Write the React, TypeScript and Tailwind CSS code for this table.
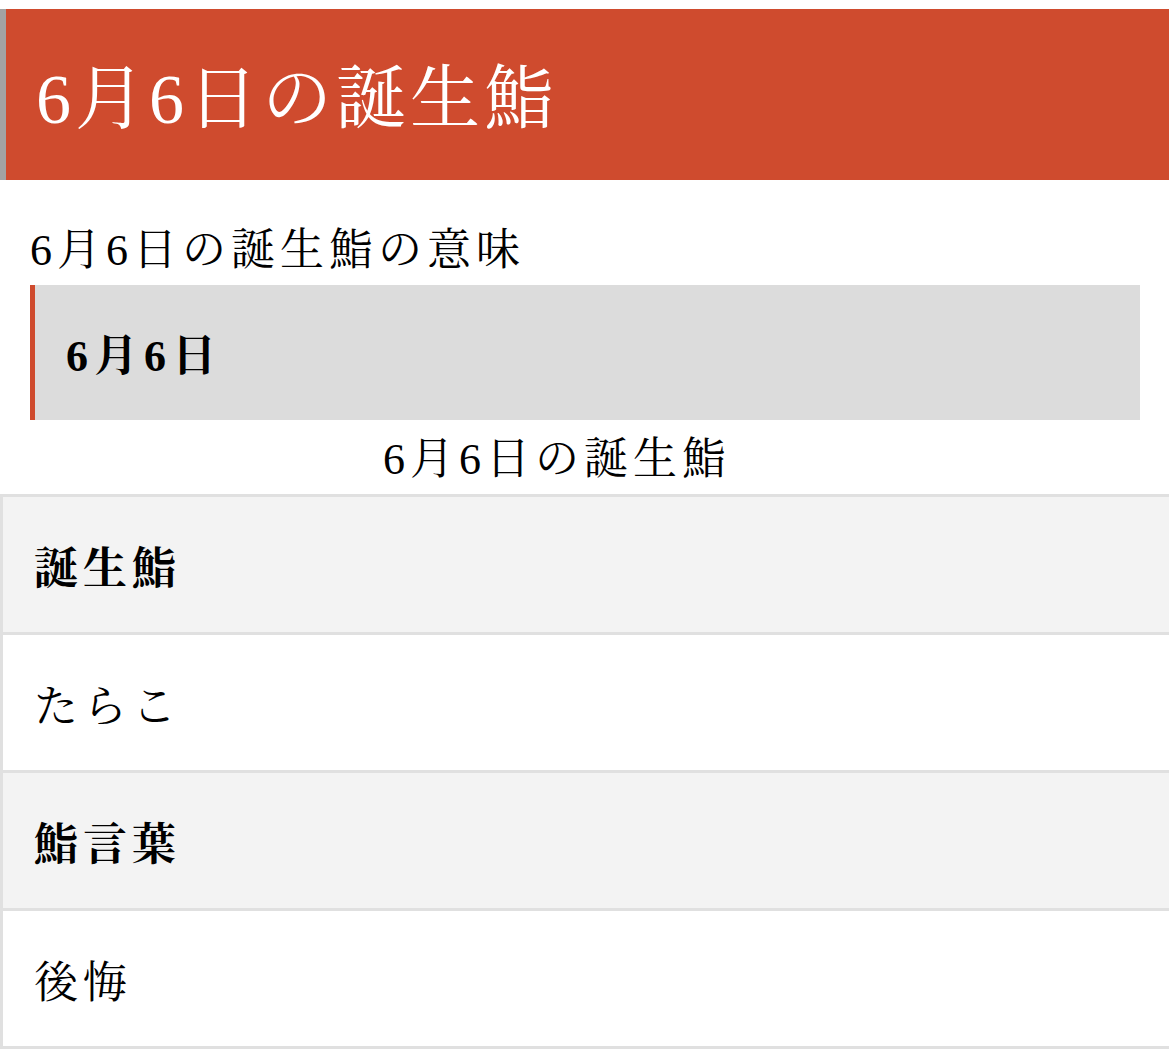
import React from "react";

const ff = {
  fontFamily:
    '"Liberation Serif", "Noto Serif CJK JP", "Noto Sans CJK JP", serif',
};

export default function App() {
  return (
    <div className="w-[1169px] h-[1064px] bg-white overflow-hidden text-black" style={ff}>
      <div className="pt-[9px]">
        <div className="h-[171px] bg-[#cf4b2e] border-l-[6px] border-[#a3a3a3] flex items-center pl-[30px] pt-[10px]">
          <h1 className="text-[70px] leading-none text-white tracking-[4px] font-normal">
            6月6日の誕生鮨
          </h1>
        </div>
      </div>
      <div className="pl-[30px] pr-[29px] pt-[47px]">
        <h2 className="text-[44px] leading-[48px] tracking-[5px] font-normal">
          6月6日の誕生鮨の意味
        </h2>
        <div className="mt-[10px] h-[135px] bg-[#dcdcdc] border-l-[5px] border-[#cf4b2e] flex items-center pl-[31px] pt-[8px]">
          <h3 className="text-[44px] leading-none font-bold tracking-[6px]">6月6日</h3>
        </div>
      </div>
      <div className="h-[74px] flex items-center pl-[383px] pt-[6px]">
        <p className="text-[44px] leading-none tracking-[5px]">6月6日の誕生鮨</p>
      </div>
      <div className="border-t-[3px] border-l-[3px] border-[#e0e0e0]">
        {[
          { t: "誕生鮨", b: true, bg: "bg-[#f3f3f3]" },
          { t: "たらこ", b: false, bg: "bg-white" },
          { t: "鮨言葉", b: true, bg: "bg-[#f3f3f3]" },
          { t: "後悔", b: false, bg: "bg-white" },
        ].map((r, i) => (
          <div
            key={i}
            className={`${r.bg} h-[138px] border-b-[3px] border-[#e0e0e0] flex items-center pl-[31px] pt-[10px]`}
          >
            <span className={`text-[44px] leading-none tracking-[5px] ${r.b ? "font-bold" : "font-normal"}`}>
              {r.t}
            </span>
          </div>
        ))}
      </div>
    </div>
  );
}
